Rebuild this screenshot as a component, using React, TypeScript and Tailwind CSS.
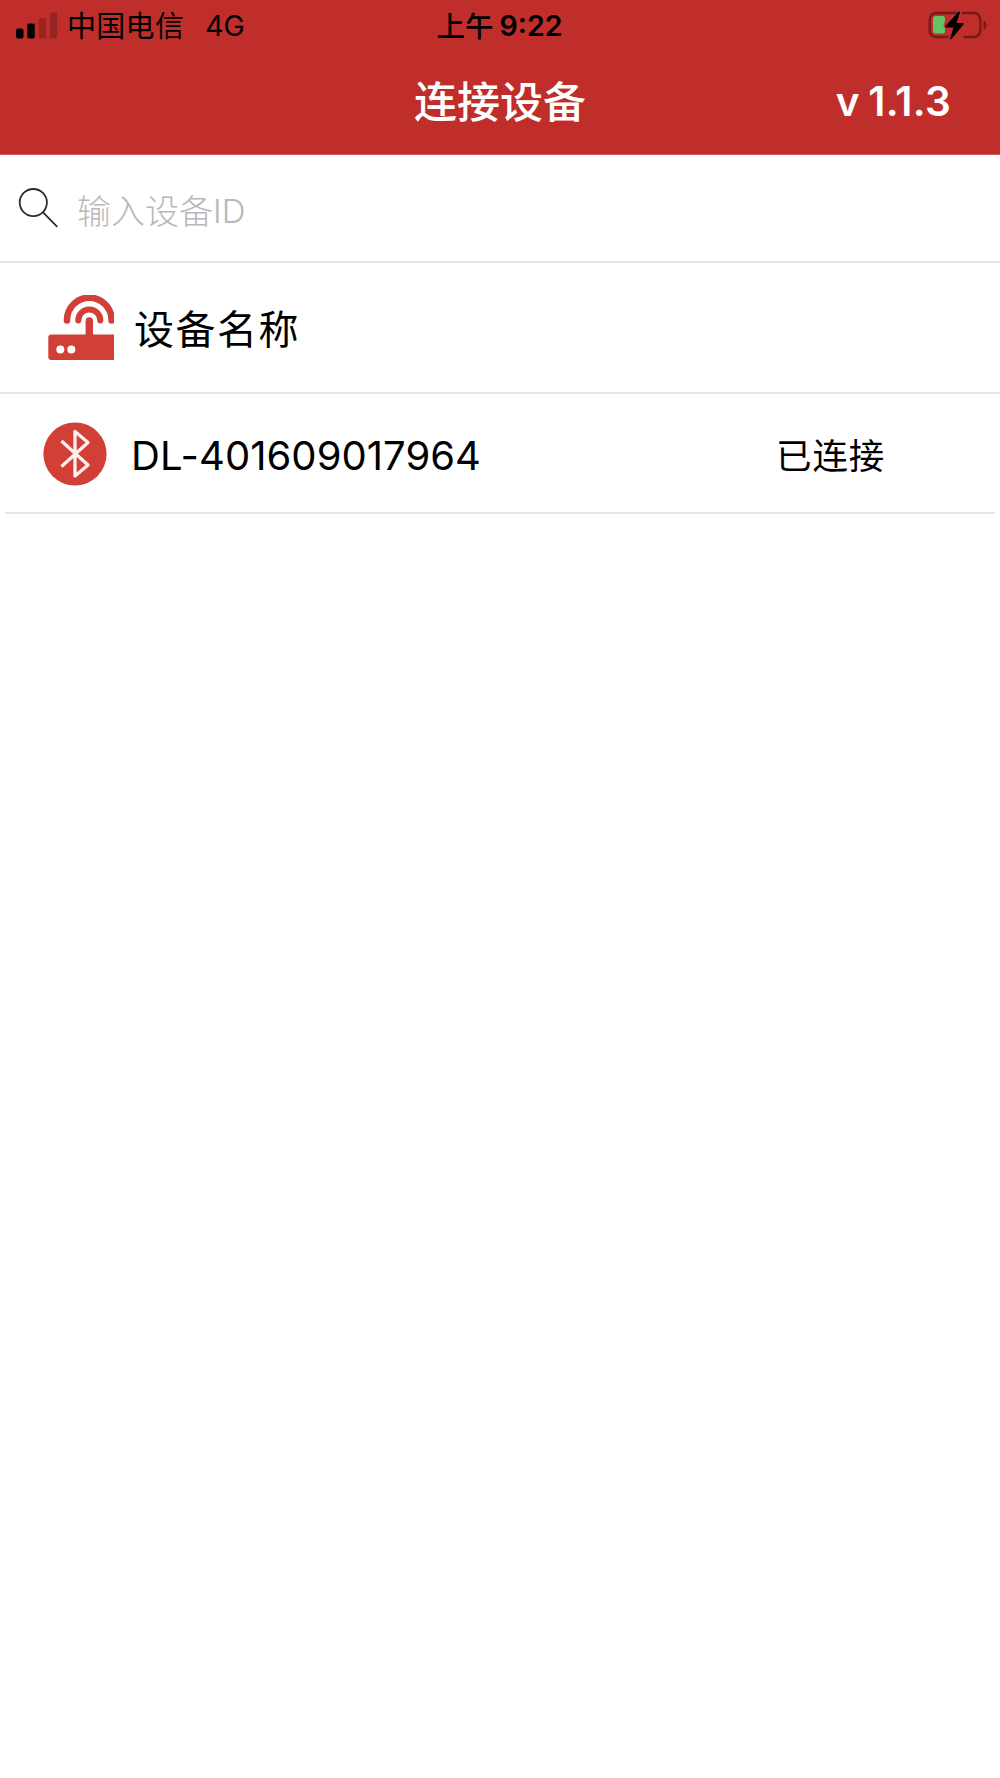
import { ReactNode } from "react";

const SignalIcon = () => (
  <svg className="mb-[2px]" width="42" height="27" viewBox="0 0 42 27">
    <rect x="0" y="16.5" width="7.5" height="10" rx="2" fill="#000" />
    <rect x="11.3" y="11.5" width="7.5" height="15" rx="2" fill="#000" />
    <rect x="22.8" y="6" width="7.2" height="20.5" rx="2" fill="#000" fillOpacity="0.2" />
    <rect x="34" y="0.3" width="7.2" height="26.2" rx="2" fill="#000" fillOpacity="0.2" />
  </svg>
);

const BatteryIcon = () => (
  <svg className="mb-px" width="60" height="30" viewBox="0 0 60 30">
    <path d="M29 2H8A6.300 6.300 0 0 0 1.700 8.300V19.700A6.300 6.300 0 0 0 8 26H20.500M35.500 26H46a6.300 6.300 0 0 0 6.300-6.300V8.300A6.300 6.300 0 0 0 46 2H34" fill="none" stroke="#761a1a" strokeWidth="2.4" />
    <path d="M55.500 9.500c4 1.500 4 8 0 9.500z" fill="#761a1a" />
    <path d="M8 5h6.500A2.500 2.500 0 0 1 17 7.500V10l-1.500 4.500 1.500 3V20a2.500 2.500 0 0 1-2.500 2.500H8A3 3 0 0 1 5 19.500V8A3 3 0 0 1 8 5z" fill="#65c466" />
    <path d="M30.500.8 17.600 14.800c-.6.800-.2 1.600.6 1.600h7.300l-3.400 11.300c-.1.800.8 1 1.400.4L35.400 13.500c.6-.8.200-1.600-.6-1.600h-6.300l3.500-10.500c.1-.9-.9-1.400-1.500-.6z" fill="#000" />
  </svg>
);

const SearchIcon = () => (
  <svg width="40" height="40" viewBox="0 0 40 40" fill="none" stroke="#2b2b2b" strokeWidth="1.8">
    <circle cx="15.3" cy="14.6" r="13.6" />
    <path d="M25 24.3 39.3 38.8" />
  </svg>
);

const RouterIcon = () => (
  <svg width="66" height="66" viewBox="0 0 66 66">
    <rect x="0.3" y="39.5" width="68" height="25.5" rx="3" fill="#d23f37" />
    <circle cx="12.3" cy="54.5" r="4" fill="#fff" />
    <circle cx="23.3" cy="54.5" r="4" fill="#fff" />
    <g fill="none" stroke="#d23f37" strokeWidth="6.6" strokeLinecap="round">
      <path d="M41.3 42V26" strokeWidth="7.4" />
      <path d="M30.3 25.5a11 11 0 0 1 22 0" strokeWidth="6" />
      <path d="M19 25.5V25a22.3 22.3 0 0 1 44.6 0v.5" />
    </g>
  </svg>
);

const BluetoothIcon = () => (
  <svg className="mt-[2px]" width="64" height="64" viewBox="0 0 64 64">
    <circle cx="32" cy="32" r="31.6" fill="#d23f37" />
    <path d="M18.5 19 45 43 32 54V9.5L45 20.5 18.5 44.5" fill="none" stroke="#fff0ef" strokeWidth="3.3" strokeLinejoin="round" />
  </svg>
);

const Row = ({ className, children }: { className: string; children: ReactNode }) => (
  <div className={`flex items-center border-[#e4e4e8] border-b-2 ${className}`}>{children}</div>
);

const App = () => {
  return (
    <main className="min-h-[1778px] w-full bg-white text-black overflow-hidden whitespace-nowrap font-['Inter','Noto_Sans_CJK_SC',sans-serif]">
      <header className="h-[154px] bg-[#bf2e2a] border-b border-[#cf5a57] box-content">
        <div className="grid h-[50px] grid-cols-3 items-center pl-4 pr-3">
          <div className="flex items-center">
            <SignalIcon />
            <span className="ml-[9px] pt-[2px] text-[29px] leading-[50px] tracking-[0.3px]">中国电信</span>
            <span className="ml-[21px] text-[28.5px] leading-[50px]">4G</span>
          </div>
          <div className="flex items-center justify-center pr-[5px] font-semibold">
            <span className="pt-px text-[28.5px] leading-[50px] font-medium">上午</span>
            <span className="ml-[6px] text-[28.5px] leading-[50px]">9:22</span>
          </div>
          <div className="flex justify-end">
            <BatteryIcon />
          </div>
        </div>
        <div className="grid h-[104px] grid-cols-3 items-center text-white">
          <h1 className="col-start-2 text-center text-[43px] font-medium leading-[102px]">连接设备</h1>
          <span className="pr-[49px] text-right text-[40.5px] font-semibold leading-[104px] tracking-[0.3px] [word-spacing:-2px]">v 1.1.3</span>
        </div>
      </header>

      <Row className="h-[108px] pl-[18px]">
        <SearchIcon />
        <span className="ml-[19px] pt-[6px] text-[34px] font-light text-[#b8b8ba]">输入设备</span>
        <span className="pt-[7px] text-[33px] font-light text-[#b8b8ba]">ID</span>
      </Row>

      <Row className="h-[131px] pl-12">
        <RouterIcon />
        <span className="ml-[20px] pt-[4px] text-[40px] tracking-[1.5px]">设备名称</span>
      </Row>

      <Row className="mx-[5px] h-[120px] pl-[38px]">
        <BluetoothIcon />
        <span className="ml-[24px] pt-[6px] text-[40px] tracking-[0.05px]">DL-401609017964</span>
        <span className="ml-auto mr-[110px] pt-[7px] text-[35.5px] tracking-[0.8px]">已连接</span>
      </Row>
    </main>
  );
};

export default App;
